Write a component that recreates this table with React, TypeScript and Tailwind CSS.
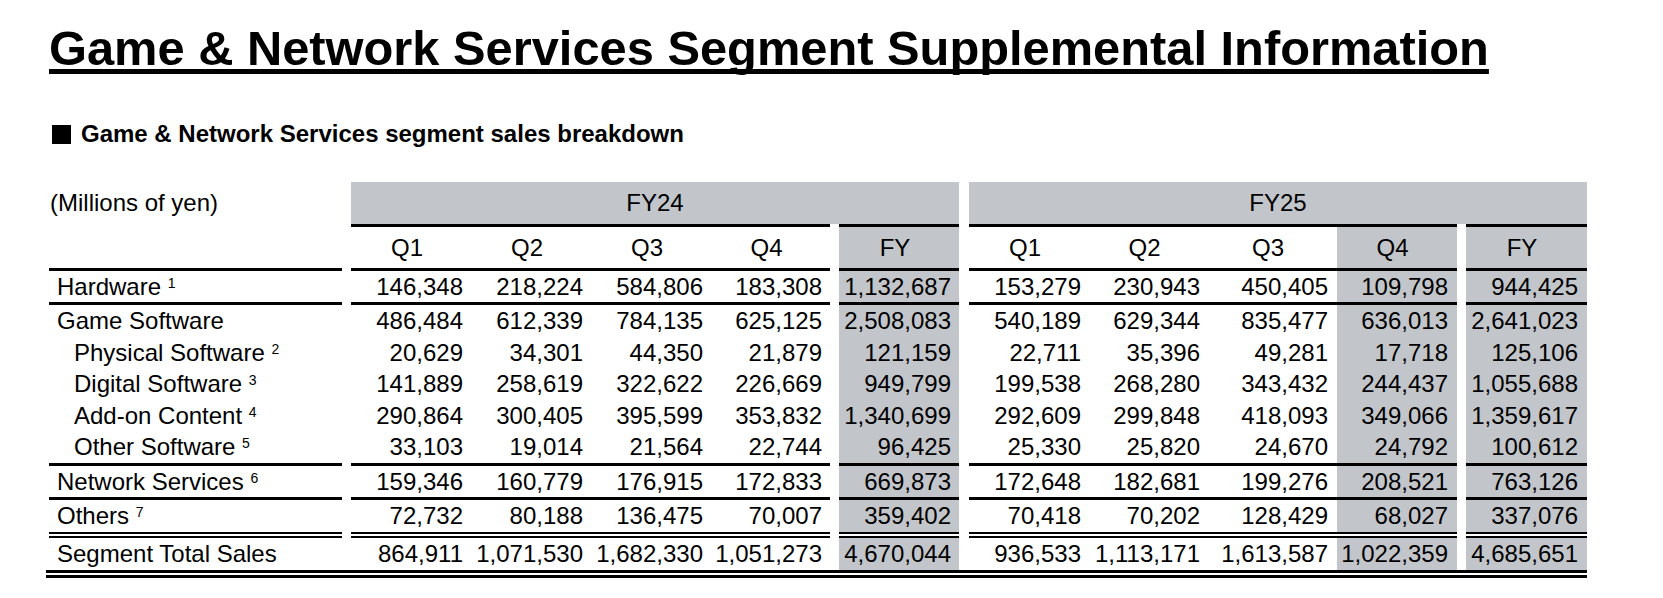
import React from "react";

const GRAY = "bg-[#c2c5c9]";

type Row = { label: string; sup?: string; indent?: boolean; v: string[] };

const block1: Row[] = [
  { label: "Hardware", sup: "1", v: ["146,348", "218,224", "584,806", "183,308", "1,132,687", "153,279", "230,943", "450,405", "109,798", "944,425"] },
];
const block2: Row[] = [
  { label: "Game Software", v: ["486,484", "612,339", "784,135", "625,125", "2,508,083", "540,189", "629,344", "835,477", "636,013", "2,641,023"] },
  { label: "Physical Software", sup: "2", indent: true, v: ["20,629", "34,301", "44,350", "21,879", "121,159", "22,711", "35,396", "49,281", "17,718", "125,106"] },
  { label: "Digital Software", sup: "3", indent: true, v: ["141,889", "258,619", "322,622", "226,669", "949,799", "199,538", "268,280", "343,432", "244,437", "1,055,688"] },
  { label: "Add-on Content", sup: "4", indent: true, v: ["290,864", "300,405", "395,599", "353,832", "1,340,699", "292,609", "299,848", "418,093", "349,066", "1,359,617"] },
  { label: "Other Software", sup: "5", indent: true, v: ["33,103", "19,014", "21,564", "22,744", "96,425", "25,330", "25,820", "24,670", "24,792", "100,612"] },
];
const block3: Row[] = [
  { label: "Network Services", sup: "6", v: ["159,346", "160,779", "176,915", "172,833", "669,873", "172,648", "182,681", "199,276", "208,521", "763,126"] },
];
const block4: Row[] = [
  { label: "Others", sup: "7", v: ["72,732", "80,188", "136,475", "70,007", "359,402", "70,418", "70,202", "128,429", "68,027", "337,076"] },
];
const total: Row = {
  label: "Segment Total Sales",
  v: ["864,911", "1,071,530", "1,682,330", "1,051,273", "4,670,044", "936,533", "1,113,171", "1,613,587", "1,022,359", "4,685,651"],
};

// Full class strings for each data column
const COLS = [
  "w-[120px] pr-[8px]",
  "w-[120px] pr-[8px]",
  "w-[120px] pr-[8px]",
  "w-[119px] pr-[8px]",
  "w-[120px] pr-[8px] bg-[#c2c5c9]",
  "w-[120px] pr-[8px]",
  "w-[119px] pr-[8px]",
  "w-[129px] pr-[9px]",
  "w-[120px] pr-[9px] bg-[#c2c5c9]",
  "w-[121px] pr-[9px] bg-[#c2c5c9]",
];

const HEAD = ["Q1", "Q2", "Q3", "Q4", "FY", "Q1", "Q2", "Q3", "Q4", "FY"];

function Cells({ vals, align, h }: { vals: string[]; align: "right" | "center"; h: string }) {
  const cell = (i: number) => (
    <div
      key={i}
      className={`${COLS[i]} ${h} ${align === "right" ? "text-right" : "text-center pr-0"} whitespace-nowrap`}
    >
      {vals[i]}
    </div>
  );
  return (
    <>
      <div className="w-[9px] shrink-0" />
      <div className="flex w-[479px]">{[0, 1, 2, 3].map(cell)}</div>
      <div className="w-[9px] shrink-0" />
      {cell(4)}
      <div className="w-[10px] shrink-0" />
      <div className="flex w-[488px]">{[5, 6, 7, 8].map(cell)}</div>
      <div className="w-[9px] shrink-0" />
      {cell(9)}
    </>
  );
}

function DataRow({ r, h }: { r: Row; h: string }) {
  return (
    <div className={`flex ${h}`}>
      <div className={`w-[293px] shrink-0 whitespace-nowrap ${r.indent ? "pl-[25px]" : "pl-[8px]"}`}>
        {r.label}
        {r.sup && (
          <>
            {" "}
            <sup className="text-[14px]">{r.sup}</sup>
          </>
        )}
      </div>
      <Cells vals={r.v} align="right" h={h} />
    </div>
  );
}

function Seg({ w, kind, blank }: { w: string; kind: "single" | "double"; blank?: boolean }) {
  if (blank) return <div className={`${w} shrink-0`} />;
  if (kind === "single") return <div className={`${w} shrink-0 h-[3px] bg-black`} />;
  return (
    <div className={`${w} shrink-0 flex flex-col`}>
      <div className="h-[2px] bg-black" />
      <div className="h-[2px] bg-white" />
      <div className="h-[2px] bg-black" />
    </div>
  );
}

function Rule({ kind = "single", noLabel }: { kind?: "single" | "double"; noLabel?: boolean }) {
  return (
    <div className="flex">
      <Seg w="w-[293px]" kind={kind} blank={noLabel} />
      <div className="w-[9px] shrink-0" />
      <Seg w="w-[479px]" kind={kind} />
      <div className="w-[9px] shrink-0" />
      <Seg w="w-[120px]" kind={kind} />
      <div className="w-[10px] shrink-0" />
      <Seg w="w-[488px]" kind={kind} />
      <div className="w-[9px] shrink-0" />
      <Seg w="w-[121px]" kind={kind} />
    </div>
  );
}

export default function App() {
  return (
    <div className="min-h-screen bg-white text-black font-['Liberation_Sans',Arial,sans-serif]">
      <div className="pl-[49px] pt-[24px]">
        <h1 className="text-[48.8px] leading-[49px] font-bold whitespace-nowrap underline decoration-[5px] underline-offset-[4px] [text-decoration-skip-ink:none]">
          Game &amp; Network Services Segment Supplemental Information
        </h1>

        <div className="mt-[49px] flex items-center text-[24px] leading-[24px] font-bold whitespace-nowrap">
          <span className="ml-[3px] mr-[10px] w-[19px] h-[19px] bg-black inline-block" />
          Game &amp; Network Services segment sales breakdown
        </div>

        <div className="mt-[36px] text-[24px]">
          {/* Fiscal year header band */}
          <div className="flex h-[42px] leading-[42px]">
            <div className="w-[293px] shrink-0 pl-[1px] whitespace-nowrap">(Millions of yen)</div>
            <div className="w-[9px] shrink-0" />
            <div className={`w-[608px] shrink-0 text-center ${GRAY}`}>FY24</div>
            <div className="w-[10px] shrink-0" />
            <div className={`w-[618px] shrink-0 text-center ${GRAY}`}>FY25</div>
          </div>
          <Rule noLabel />

          {/* Quarter header */}
          <div className="flex h-[41px] leading-[41px]">
            <div className="w-[293px] shrink-0" />
            <Cells vals={HEAD} align="center" h="h-[41px]" />
          </div>
          <Rule />

          {block1.map((r) => (
            <DataRow key={r.label} r={r} h="h-[31px] leading-[31px]" />
          ))}
          <Rule />

          {block2.map((r) => (
            <DataRow key={r.label} r={r} h="h-[31.6px] leading-[31.6px]" />
          ))}
          <Rule />

          {block3.map((r) => (
            <DataRow key={r.label} r={r} h="h-[31px] leading-[31px]" />
          ))}
          <Rule />

          {block4.map((r) => (
            <DataRow key={r.label} r={r} h="h-[32px] leading-[32px]" />
          ))}
          <Rule kind="double" />

          <DataRow r={total} h="h-[32px] leading-[32px]" />

          <div className="-ml-[3px] w-[1541px] flex flex-col">
            <div className="h-[3px] bg-black" />
            <div className="h-[2px] bg-white" />
            <div className="h-[3px] bg-black" />
          </div>
        </div>
      </div>
    </div>
  );
}
